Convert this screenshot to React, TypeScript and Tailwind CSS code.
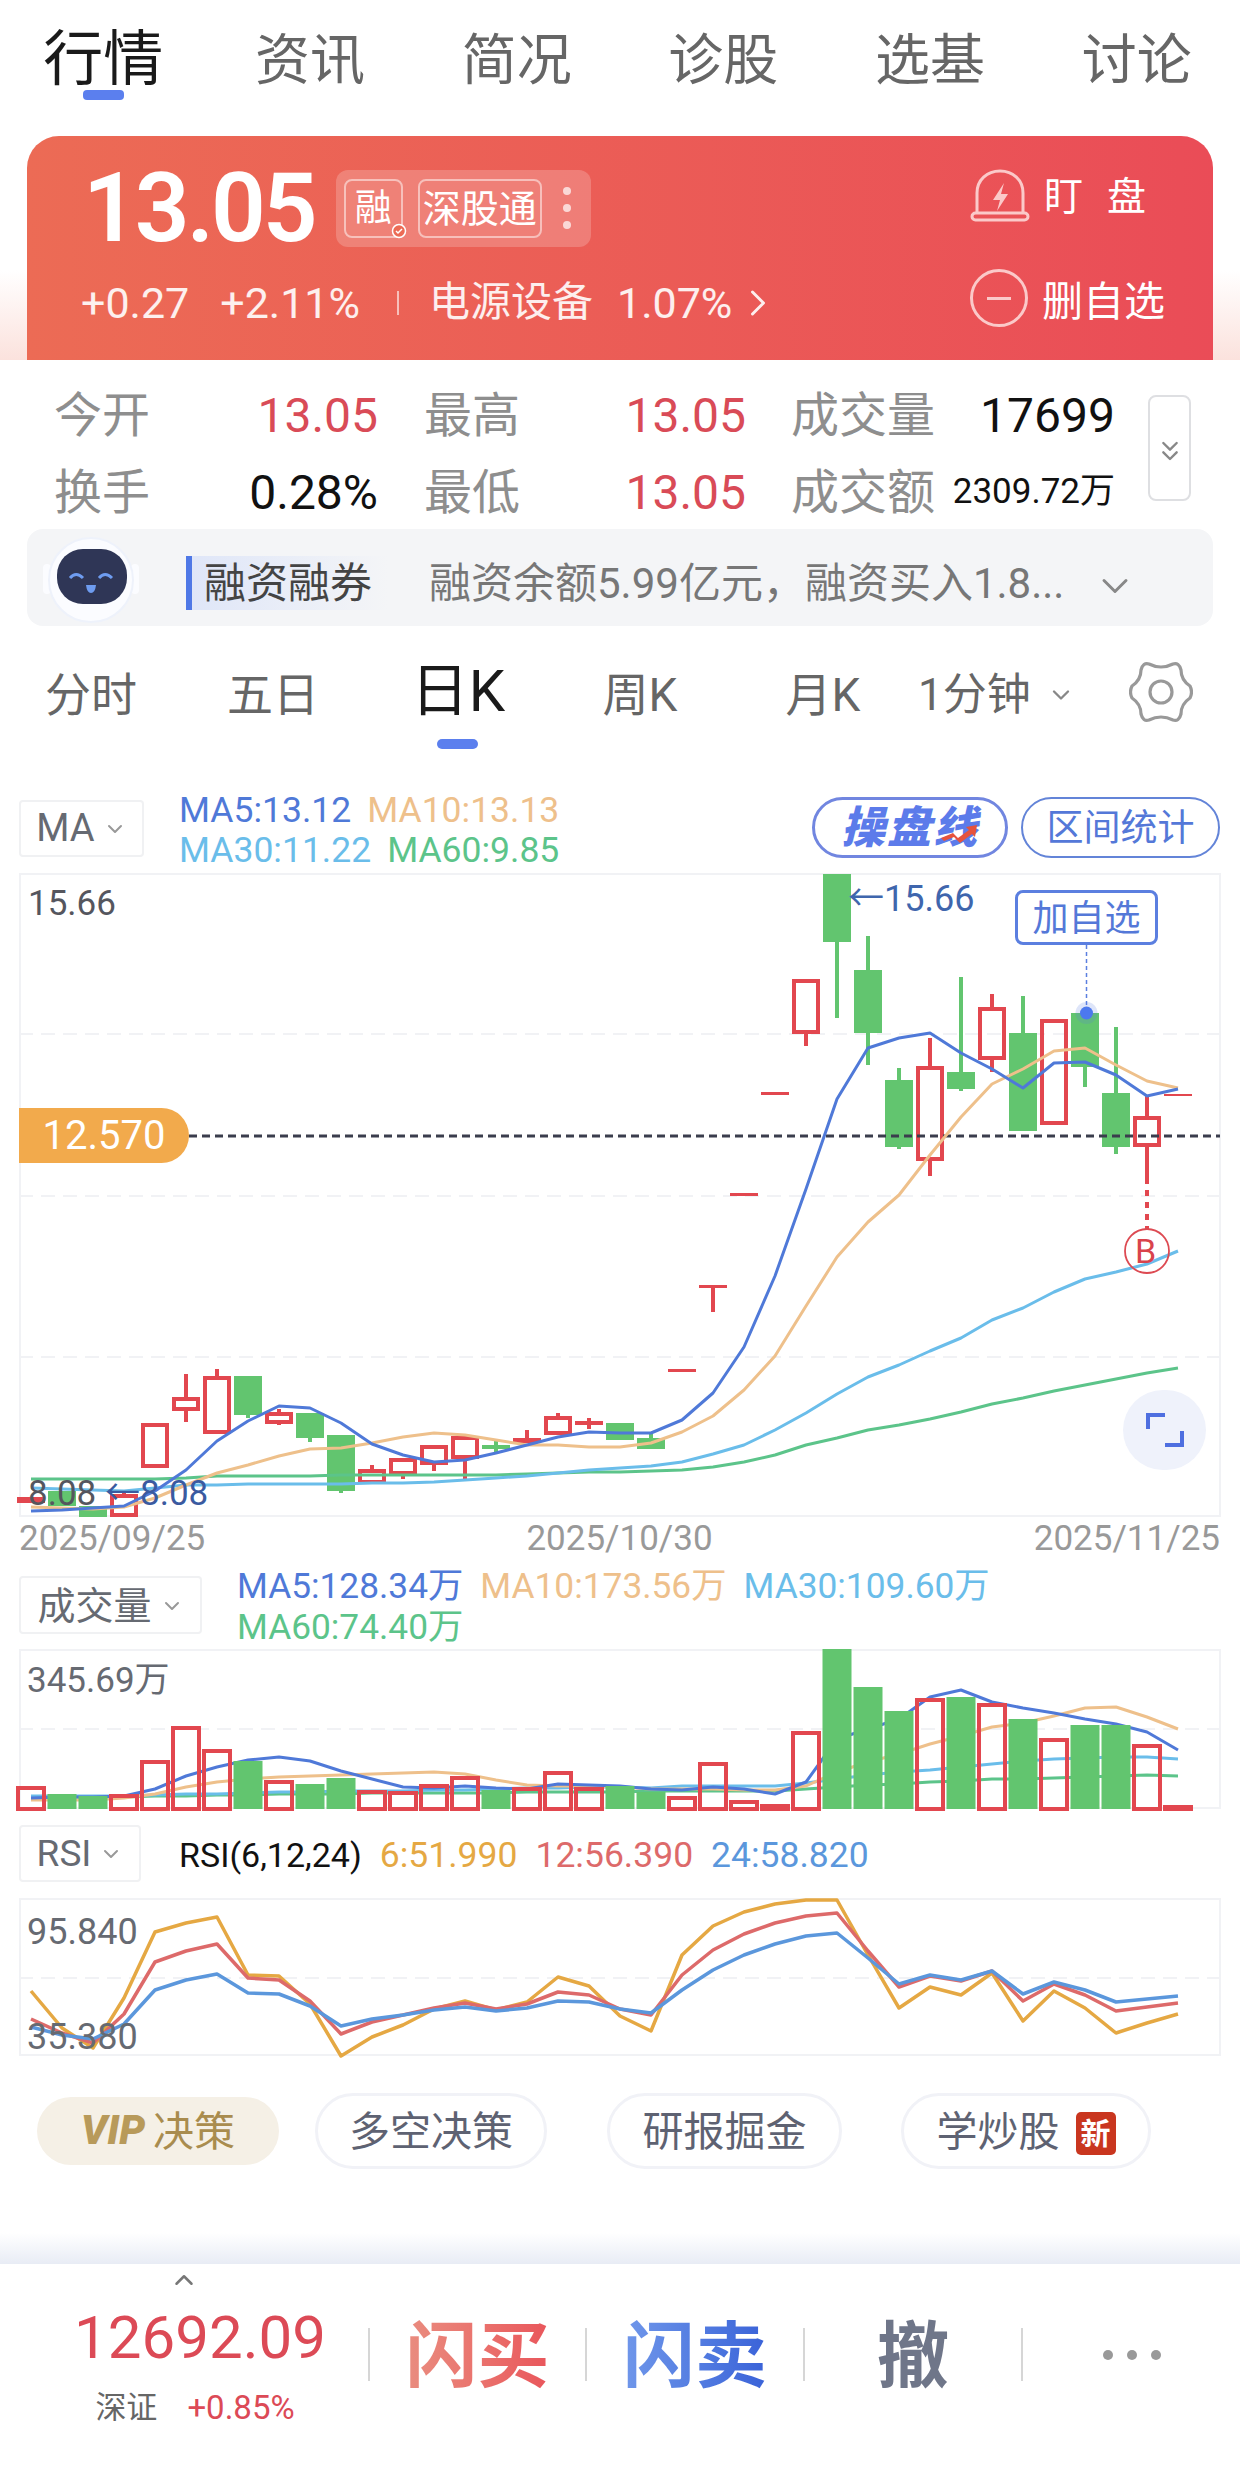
import { ChevronDown, ChevronRight, ChevronUp, ChevronsDown } from "lucide-react";

const tabs = ["资讯", "简况", "诊股", "选基", "讨论"];

// [up, bodyTop, bodyBottom, wickTop, wickBottom]
const candles: [number, number, number, number, number][] = [
  [1, 1497, 1503, 1497, 1503],
  [0, 1491, 1506, 1491, 1506],
  [0, 1506, 1517, 1506, 1517],
  [1, 1496, 1515, 1490, 1515],
  [1, 1425, 1466, 1425, 1466],
  [1, 1399, 1409, 1374, 1422],
  [1, 1378, 1432, 1369, 1432],
  [0, 1376, 1415, 1376, 1418],
  [1, 1414, 1422, 1409, 1425],
  [0, 1413, 1438, 1413, 1442],
  [0, 1435, 1491, 1435, 1493],
  [1, 1471, 1482, 1465, 1482],
  [1, 1460, 1473, 1460, 1479],
  [1, 1447, 1463, 1447, 1471],
  [1, 1438, 1457, 1438, 1479],
  [0, 1445, 1449, 1441, 1453],
  [1, 1438, 1443, 1430, 1443],
  [1, 1418, 1433, 1413, 1433],
  [1, 1421, 1425, 1418, 1429],
  [0, 1423, 1440, 1423, 1440],
  [0, 1438, 1449, 1433, 1449],
  [1, 1369, 1372, 1369, 1372],
  [1, 1285, 1288, 1285, 1312],
  [1, 1193, 1196, 1193, 1196],
  [1, 1092, 1095, 1092, 1095],
  [1, 981, 1032, 981, 1046],
  [0, 874, 942, 874, 1018],
  [0, 970, 1033, 936, 1065],
  [0, 1080, 1147, 1068, 1149],
  [1, 1068, 1159, 1038, 1176],
  [0, 1072, 1089, 977, 1091],
  [1, 1009, 1058, 994, 1072],
  [0, 1033, 1131, 996, 1131],
  [1, 1021, 1123, 1021, 1123],
  [0, 1013, 1067, 1013, 1087],
  [0, 1093, 1147, 1027, 1154],
  [1, 1118, 1145, 1096, 1178],
  [1, 1094, 1096, 1094, 1096],
];

const ma5 = [1511, 1510, 1508, 1506, 1491, 1470, 1441, 1421, 1406, 1408, 1423, 1444, 1455, 1462, 1460, 1453, 1445, 1437, 1432, 1433, 1433, 1420, 1393, 1347, 1276, 1189, 1099, 1048, 1038, 1033, 1053, 1069, 1088, 1063, 1062, 1075, 1096, 1089];
const ma10 = [1507, 1508, 1509, 1507, 1498, 1485, 1473, 1465, 1456, 1449, 1448, 1443, 1437, 1433, 1435, 1440, 1445, 1445, 1447, 1447, 1443, 1432, 1416, 1390, 1356, 1306, 1257, 1222, 1195, 1155, 1117, 1084, 1069, 1051, 1048, 1065, 1081, 1088];
const ma30 = [1488, 1489, 1490, 1491, 1488, 1485, 1485, 1484, 1484, 1484, 1484, 1483, 1483, 1482, 1480, 1478, 1476, 1473, 1470, 1468, 1466, 1462, 1454, 1445, 1430, 1413, 1394, 1377, 1365, 1351, 1338, 1320, 1308, 1292, 1279, 1272, 1264, 1251];
const ma60 = [1479, 1479, 1479, 1479, 1479, 1478, 1476, 1476, 1476, 1476, 1475, 1475, 1475, 1475, 1475, 1475, 1474, 1473, 1472, 1472, 1471, 1470, 1467, 1462, 1455, 1445, 1438, 1430, 1425, 1419, 1412, 1404, 1398, 1391, 1385, 1379, 1373, 1368];

const volumes: [number, number][] = [
  [1, 1788], [0, 1794], [0, 1796], [1, 1796], [1, 1762], [1, 1728], [1, 1751], [0, 1761], [1, 1782], [0, 1784],
  [0, 1778], [1, 1792], [1, 1793], [1, 1786], [1, 1778], [0, 1790], [1, 1789], [1, 1773], [1, 1789], [0, 1786],
  [0, 1792], [1, 1798], [1, 1764], [1, 1802], [1, 1806], [1, 1733], [0, 1649], [0, 1687], [0, 1711], [1, 1700],
  [0, 1697], [1, 1705], [0, 1719], [1, 1740], [0, 1725], [0, 1725], [1, 1746], [1, 1807],
];

const volMa5 = [1798, 1797, 1797, 1796, 1789, 1776, 1767, 1760, 1757, 1761, 1771, 1779, 1787, 1788, 1786, 1788, 1789, 1784, 1785, 1786, 1789, 1790, 1787, 1789, 1794, 1782, 1739, 1729, 1719, 1697, 1690, 1702, 1708, 1713, 1719, 1724, 1732, 1750];
const volMa10 = [1800, 1800, 1800, 1798, 1794, 1787, 1782, 1779, 1777, 1776, 1775, 1774, 1773, 1772, 1774, 1780, 1785, 1786, 1786, 1787, 1789, 1789, 1789, 1790, 1790, 1786, 1772, 1762, 1754, 1744, 1736, 1727, 1723, 1716, 1708, 1707, 1717, 1729];
const volMa30 = [1796, 1796, 1796, 1796, 1795, 1794, 1794, 1793, 1792, 1792, 1791, 1791, 1791, 1790, 1790, 1789, 1788, 1788, 1787, 1787, 1788, 1786, 1786, 1786, 1786, 1783, 1779, 1775, 1772, 1770, 1767, 1764, 1761, 1759, 1758, 1757, 1757, 1759];
const volMa60 = [1797, 1797, 1797, 1797, 1796, 1796, 1795, 1795, 1794, 1794, 1794, 1793, 1793, 1793, 1793, 1793, 1792, 1792, 1792, 1792, 1791, 1791, 1791, 1791, 1791, 1789, 1787, 1785, 1784, 1782, 1781, 1779, 1779, 1778, 1777, 1776, 1775, 1776];

const rsi6 = [1991, 2028, 2048, 1998, 1932, 1923, 1917, 1975, 1976, 2004, 2056, 2037, 2025, 2009, 2001, 2010, 2002, 1977, 1986, 2016, 2031, 1955, 1926, 1912, 1904, 1900, 1900, 1955, 2008, 1987, 1995, 1973, 2021, 1991, 2008, 2033, 2023, 2014];
const rsi12 = [2019, 2033, 2043, 2014, 1962, 1951, 1944, 1978, 1980, 2001, 2034, 2022, 2015, 2008, 2003, 2009, 2004, 1992, 1995, 2009, 2015, 1975, 1950, 1934, 1923, 1916, 1913, 1951, 1987, 1976, 1981, 1971, 2001, 1984, 1995, 2011, 2007, 2003];
const rsi24 = [2027, 2035, 2039, 2024, 1990, 1980, 1974, 1993, 1994, 2006, 2026, 2019, 2015, 2010, 2007, 2011, 2008, 2001, 2002, 2009, 2013, 1990, 1970, 1955, 1944, 1936, 1933, 1958, 1984, 1975, 1980, 1971, 1994, 1982, 1990, 2002, 1999, 1996];

const cx = (i: number) => 31 + 31 * i;
const toPoints = (ys: number[]) => ys.map((y, i) => `${cx(i)},${y}`).join(" ");

function Line({ ys, color, width = 3 }: { ys: number[]; color: string; width?: number }) {
  return <polyline points={toPoints(ys)} fill="none" stroke={color} strokeWidth={width} strokeLinejoin="round" />;
}

function GridLine({ y }: { y: number }) {
  return <line x1="19" x2="1220" y1={y} y2={y} stroke="#f1f2f5" strokeWidth="2" strokeDasharray="14 8" />;
}

function Dropdown({ label, className }: { label: string; className: string }) {
  return (
    <div className={`flex items-center justify-center gap-2 rounded border-2 border-[#f0f1f3] text-[#666a72] ${className}`}>
      <span>{label}</span>
      <ChevronDown className="h-6 w-6 text-[#999]" strokeWidth={2} />
    </div>
  );
}

function Stat({ label, value, tone, small }: { label: string; value: string; tone: string; small?: boolean }) {
  return (
    <div className="flex h-[77px] items-center justify-between">
      <span className="text-[48px] text-[#8e8e8e]">{label}</span>
      <span className={`${small ? "text-[35px]" : "text-[48px]"} ${tone}`}>{value}</span>
    </div>
  );
}

function Pill({ children, className }: { children: React.ReactNode; className: string }) {
  return (
    <div className={`flex h-[76px] items-center justify-center rounded-[38px] border-[3px] border-[#f1f2f7] pt-[4px] text-[41px] text-[#5e6272] ${className}`}>
      {children}
    </div>
  );
}

export default function App() {
  return (
    <div className="h-[2475px] w-[1240px] overflow-hidden bg-white font-['Roboto','Noto_Sans_CJK_SC',sans-serif]">
      {/* top tabs */}
      <nav className="grid h-[136px] grid-cols-6 pt-[25px]">
        <div className="relative flex h-[70px] justify-center text-[60px] leading-[70px] text-[#1a1a1a]">
          行情
          <span className="absolute left-[83px] top-[65px] h-[10px] w-[41px] rounded-[4px] bg-[#5b7fee]" />
        </div>
        {tabs.map((t) => (
          <div key={t} className="flex h-[70px] justify-center text-[55px] leading-[70px] text-[#666]">
            {t}
          </div>
        ))}
      </nav>

      {/* quote card */}
      <div className="h-[224px] bg-gradient-to-b from-white via-white via-60% to-[#fbe2dd] px-[27px]">
        <div className="flex h-full justify-between rounded-t-[32px] bg-gradient-to-r from-[#ec6b55] to-[#ea4c57] pl-[56px] pr-[47px] text-white">
          <div>
            <div className="mt-[33px] flex h-[78px] items-center">
              <span className="text-[96px] font-semibold tracking-[-3px] leading-none">13.05</span>
              <div className="ml-[21px] flex h-[77px] w-[255px] items-center gap-[15px] rounded-[12px] bg-white/20 pl-[8px]">
                <div className="relative flex h-[59px] w-[59px] items-center justify-center rounded-[8px] border-2 border-white/50 pt-[2px] text-[37px]">
                  融
                  <svg viewBox="0 0 16 16" className="absolute -bottom-[3px] -right-[6px] h-4 w-4">
                    <circle cx="8" cy="8" r="6.5" fill="#ec6b55" stroke="white" strokeWidth="1.5" />
                    <path d="M5 8l2 2 4-4" fill="none" stroke="white" strokeWidth="1.5" />
                  </svg>
                </div>
                <div className="flex h-[59px] w-[124px] items-center justify-center rounded-[8px] border-2 border-white/50 pt-[2px] text-[38px]">深股通</div>
                <div className="ml-[6px] flex flex-col gap-[9px]">
                  <span className="h-2 w-2 rounded-full bg-white/70" />
                  <span className="h-2 w-2 rounded-full bg-white/70" />
                  <span className="h-2 w-2 rounded-full bg-white/70" />
                </div>
              </div>
            </div>
            <div className="-ml-[2px] mt-[31px] flex h-[50px] items-center text-[43px] text-white/90">
              <span>+0.27</span>
              <span className="ml-[31px]">+2.11%</span>
              <span className="ml-[37px] h-6 w-[2px] bg-white/60" />
              <span className="ml-[30px] text-[41px]">电源设备</span>
              <span className="ml-[24px]">1.07%</span>
              <ChevronRight className="ml-[4px] h-[44px] w-[44px]" strokeWidth={1.6} />
            </div>
          </div>
          <div className="w-[196px] pt-[33px]">
            <div className="flex h-[54px] items-center">
              <svg viewBox="0 0 60 54" className="h-[54px] w-[60px] shrink-0" fill="none" stroke="#fbc9c9" strokeWidth="3">
                <path d="M7 44V24C7 11 17 2 30 2s23 9 23 22v20" />
                <rect x="2" y="44" width="56" height="7" rx="3.5" />
                <path d="M34 14L23 31h7l-3 11 11-17h-7z" fill="#fbc9c9" stroke="none" />
              </svg>
              <span className="ml-[14px] flex gap-[24px] whitespace-nowrap pt-[3px] text-[39px] text-white">
                <span>盯</span>
                <span>盘</span>
              </span>
            </div>
            <div className="mt-[46px] flex h-[58px] items-center">
              <div className="flex h-[58px] w-[58px] shrink-0 items-center justify-center rounded-full border-[3px] border-[#fbc9c9]">
                <span className="h-[3px] w-[24px] bg-[#fbc9c9]" />
              </div>
              <span className="ml-[14px] whitespace-nowrap pt-[9px] text-[41px] text-white">删自选</span>
            </div>
          </div>
        </div>
      </div>

      {/* stats */}
      <div className="flex h-[169px] pl-[54px] pt-[17px]">
        <div className="w-[324px]">
          <Stat label="今开" value="13.05" tone="text-[#d94b57]" />
          <Stat label="换手" value="0.28%" tone="text-[#111]" />
        </div>
        <div className="ml-[46px] w-[322px]">
          <Stat label="最高" value="13.05" tone="text-[#d94b57]" />
          <Stat label="最低" value="13.05" tone="text-[#d94b57]" />
        </div>
        <div className="ml-[45px] w-[324px]">
          <Stat label="成交量" value="17699" tone="text-[#111]" />
          <Stat label="成交额" value="2309.72万" tone="text-[#111]" small />
        </div>
        <div className="ml-[33px] mt-[18px] flex h-[106px] w-[43px] items-end justify-center rounded-[8px] border-2 border-[#dedfe2] pb-[32px]">
          <ChevronsDown className="h-8 w-8 text-[#888]" strokeWidth={1.8} />
        </div>
      </div>

      {/* margin info */}
      <div className="mx-[27px] flex h-[97px] items-center rounded-[16px] bg-[#f4f5f7]">
        <svg viewBox="0 0 96 88" className="ml-[16px] mt-[5px] h-[88px] w-[96px]">
          <rect x="0" y="28" width="8" height="30" rx="4" fill="#fbfcff" />
          <rect x="88" y="28" width="8" height="30" rx="4" fill="#fbfcff" />
          <ellipse cx="48" cy="44" rx="42" ry="42" fill="#fbfcff" stroke="#eef2fb" strokeWidth="2" />
          <rect x="14" y="13" width="70" height="55" rx="26" fill="#2f3656" />
          <path d="M27 42q6-7 13 0M56 42q6-7 13 0" fill="none" stroke="#6e9cf0" strokeWidth="3" />
          <path d="M43 49h10q-1 8-5 8t-5-8z" fill="#6e9cf0" />
        </svg>
        <div className="ml-[47px] mt-[11px] flex h-[54px] w-[201px] items-center border-l-[6px] border-[#4f78e6] bg-gradient-to-r from-[#dfe6f8] to-[#f4f5f7] pl-[12px] text-[42px] text-[#444]">
          融资融券
        </div>
        <span className="ml-[42px] mt-[11px] w-[640px] whitespace-nowrap text-[42px] text-[#777]">融资余额5.99亿元，融资买入1.8...</span>
        <ChevronDown className="ml-[24px] mt-[16px] h-[44px] w-[44px] text-[#888]" strokeWidth={1.6} />
      </div>

      {/* period tabs */}
      <div className="flex h-[162px] items-start pt-[43px] text-[46px] leading-[52px] text-[#666]">
        <span className="w-[182px] text-center">分时</span>
        <span className="w-[182px] text-center">五日</span>
        <span className="relative -ml-[4px] -mt-[4px] mr-[4px] w-[196px] text-center text-[58px] text-[#1a1a1a]">
          日K
          <span className="absolute left-[77px] top-[74px] h-[10px] w-[41px] rounded-[5px] bg-[#5b7fee]" />
        </span>
        <span className="w-[160px] text-center">周K</span>
        <span className="w-[206px] text-center">月K</span>
        <span className="-ml-[8px] flex w-[159px] items-center gap-[16px] text-[44px]">
          1分钟
          <ChevronDown className="h-7 w-7 text-[#888]" strokeWidth={2} />
        </span>
        <svg viewBox="0 0 64 64" className="ml-[52px] -mt-[9px] h-[64px] w-[64px]" fill="none" stroke="#999" strokeWidth="3.2" strokeLinejoin="round">
          <path d="M20 4Q32 10 44 4Q50 2 52 10Q52 20 61 26Q64 32 61 38Q52 44 52 54Q50 62 44 60Q32 54 20 60Q14 62 12 54Q12 44 3 38Q0 32 3 26Q12 20 12 10Q14 2 20 4Z" />
          <circle cx="32" cy="32" r="11" />
        </svg>
      </div>

      {/* chart header */}
      <div className="flex h-[85px] pl-[19px] pr-[20px]">
        <Dropdown label="MA" className="mt-[12px] h-[57px] w-[125px] text-[38px]" />
        <div className="ml-[35px] mt-[2px] text-[35.5px] leading-[40px]">
          <div className="flex gap-[16px]">
            <span className="text-[#4f79d8]">MA5:13.12</span>
            <span className="text-[#eec08b]">MA10:13.13</span>
          </div>
          <div className="flex gap-[16px]">
            <span className="text-[#6abdea]">MA30:11.22</span>
            <span className="text-[#5cc48a]">MA60:9.85</span>
          </div>
        </div>
        <div className="ml-auto mt-[9px] flex h-[61px] gap-[13px]">
          <div className="relative flex w-[196px] items-center justify-center rounded-full border-[3px] border-[#7186e0] text-[44px] font-black italic tracking-[2px] text-[#5c7bea]">
            操盘线
            <svg viewBox="0 0 40 20" className="absolute right-[26px] top-[24px] h-[20px] w-[40px]">
              <path d="M2 14L14 9l5 5 11-8-3-3 11-2-2 12-3-3-12 9-6-6-10 4z" fill="#e5533d" />
            </svg>
          </div>
          <div className="flex w-[199px] items-center justify-center rounded-full border-2 border-[#6384d8] pt-[3px] text-[37px] text-[#5478d8]">区间统计</div>
        </div>
      </div>

      {/* candle chart */}
      <div className="relative mx-[19px] h-[644px] border-x-2 border-y-2 border-[#f1f2f5]">
        <svg viewBox="19 873 1201 644" className="absolute -left-[2px] -top-[2px] h-[644px] w-[1201px] overflow-visible">
          <GridLine y={1034} />
          <GridLine y={1196} />
          <GridLine y={1357} />
          {candles.map(([up, top, bottom, wickTop, wickBottom], i) => {
            const color = up ? "#e2474f" : "#62c56f";
            const flat = bottom - top < 8;
            return (
              <g key={i}>
                {wickTop < top && <line x1={cx(i)} x2={cx(i)} y1={wickTop} y2={top} stroke={color} strokeWidth="4" />}
                {wickBottom > bottom && <line x1={cx(i)} x2={cx(i)} y1={bottom} y2={wickBottom} stroke={color} strokeWidth="4" />}
                {up && !flat ? (
                  <rect x={cx(i) - 12} y={top} width="24" height={bottom - top} fill="none" stroke={color} strokeWidth="4" />
                ) : (
                  <rect x={cx(i) - 14} y={top} width="28" height={bottom - top} fill={color} />
                )}
              </g>
            );
          })}
          <line x1="189" x2="1220" y1="1136" y2="1136" stroke="#3a3d4d" strokeWidth="3" strokeDasharray="8 5" />
          <Line ys={ma60} color="#5cc48a" />
          <Line ys={ma30} color="#6abdea" />
          <Line ys={ma10} color="#eec08b" />
          <Line ys={ma5} color="#4f79d8" />
          <line x1="1147" x2="1147" y1="1178" y2="1229" stroke="#e2474f" strokeWidth="4" strokeDasharray="6 6" />
          <ellipse cx="1147" cy="1251" rx="22" ry="22" fill="none" stroke="#dd4a52" strokeWidth="1.8" />
          <line x1="1086.5" x2="1086.5" y1="945" y2="1008" stroke="#5b7fe0" strokeWidth="1.5" strokeDasharray="4 3" />
          <circle cx="1086.5" cy="1013" r="11" fill="#5b7fe0" fillOpacity="0.2" />
          <circle cx="1086.5" cy="1013" r="6.5" fill="#4c78ee" />
        </svg>
        <span className="absolute left-[7px] top-[10px] text-[35px] leading-[38px] text-[#55565e]">15.66</span>
        <span className="absolute left-[827px] top-[5px] text-[36px] leading-[38px] text-[#3f66ad]">←15.66</span>
        <div className="absolute left-[994px] top-[15px] flex h-[55px] w-[143px] items-center justify-center rounded-[8px] border-[3px] border-[#5b7fe0] pt-[3px] text-[36px] text-[#5478d8]">
          加自选
        </div>
        <div className="absolute -left-[2px] top-[233px] flex h-[55px] w-[170px] items-center justify-center rounded-r-[28px] bg-[#f2aa4c] text-[40px] text-white">12.570</div>
        <span className="absolute left-[7px] top-[600px] text-[35px] leading-[38px] text-[#55565e]">8.08</span>
        <span className="absolute left-[84px] top-[600px] text-[35px] leading-[38px] text-[#3a5aa0]">←8.08</span>
        <span className="absolute left-[1114px] top-[356px] text-[34px] leading-[40px] text-[#d9434c]">B</span>
        <div className="absolute left-[1102px] top-[515px] flex h-[80px] w-[83px] items-center justify-center rounded-full bg-[#eff2fb]">
          <svg viewBox="0 0 38 36" className="h-[36px] w-[38px]" fill="none" stroke="#4e6fe0" strokeWidth="4">
            <path d="M2 17V3h17M36 19v14H19" />
          </svg>
        </div>
      </div>

      {/* dates */}
      <div className="flex h-[42px] items-center justify-between pl-[19px] pr-[20px] pt-[2px] text-[35px] text-[#999]">
        <span>2025/09/25</span>
        <span>2025/10/30</span>
        <span>2025/11/25</span>
      </div>

      {/* volume */}
      <div className="flex h-[90px] pl-[19px]">
        <Dropdown label="成交量" className="mt-[17px] h-[58px] w-[183px] pt-[2px] text-[38px]" />
        <div className="ml-[35px] mt-[7px] text-[35.3px] leading-[41px]">
          <div className="flex gap-[17px]">
            <span className="text-[#4f79d8]">MA5:128.34万</span>
            <span className="text-[#eec08b]">MA10:173.56万</span>
            <span className="text-[#6abdea]">MA30:109.60万</span>
          </div>
          <div className="text-[#5cc48a]">MA60:74.40万</div>
        </div>
      </div>
      <div className="relative mx-[19px] h-[160px] border-2 border-[#f1f2f5]">
        <svg viewBox="19 1649 1201 160" className="absolute -left-[2px] -top-[2px] h-[160px] w-[1201px] overflow-visible">
          <GridLine y={1729} />
          <Line ys={volMa60} color="#5cc48a" />
          <Line ys={volMa30} color="#6abdea" />
          <Line ys={volMa10} color="#eec08b" />
          <Line ys={volMa5} color="#4f79d8" />
          {volumes.map(([up, top], i) =>
            up ? (
              <rect key={i} x={cx(i) - 13} y={top} width="26" height={1809 - top} fill="none" stroke="#e2474f" strokeWidth="4" />
            ) : (
              <rect key={i} x={cx(i) - 14.5} y={top} width="29" height={1809 - top} fill="#62c56f" />
            ),
          )}
        </svg>
        <span className="absolute left-[6px] top-[10px] text-[35px] leading-[40px] text-[#666a72]">345.69万</span>
      </div>

      {/* rsi */}
      <div className="flex h-[89px] pl-[19px]">
        <Dropdown label="RSI" className="mt-[16px] h-[57px] w-[122px] text-[37px]" />
        <div className="ml-[38px] mt-[18px] flex h-[57px] items-center gap-[18px] text-[35.5px]">
          <span className="text-[34px] text-[#111]">RSI(6,12,24)</span>
          <span className="text-[#e5a843]">6:51.990</span>
          <span className="text-[#dd6a6a]">12:56.390</span>
          <span className="text-[#5b97dc]">24:58.820</span>
        </div>
      </div>
      <div className="relative mx-[19px] h-[158px] border-2 border-[#f1f2f5]">
        <svg viewBox="19 1898 1201 158" className="absolute -left-[2px] -top-[2px] h-[158px] w-[1201px] overflow-visible">
          <GridLine y={1978} />
          <Line ys={rsi6} color="#e5a843" width={3.5} />
          <Line ys={rsi12} color="#dd6a6a" width={3.5} />
          <Line ys={rsi24} color="#5b97dc" width={3.5} />
        </svg>
        <span className="absolute left-[6px] top-[11px] text-[36px] leading-[42px] text-[#666a72]">95.840</span>
        <span className="absolute left-[6px] top-[116px] text-[36px] leading-[42px] text-[#666a72]">35.380</span>
      </div>

      {/* feature pills */}
      <div className="ml-[37px] mt-[37px] flex h-[76px] items-center">
        <div className="flex h-[68px] w-[242px] items-center justify-center gap-[8px] rounded-[34px] bg-[#f5f0e6] text-[41px] text-[#a98c4e]">
          <span className="font-black italic text-[#b89a5a]">VIP</span>
          <span className="pt-[4px]">决策</span>
        </div>
        <Pill className="ml-[36px] w-[232px]">多空决策</Pill>
        <Pill className="ml-[60px] w-[235px]">研报掘金</Pill>
        <Pill className="ml-[59px] w-[250px] gap-[16px]">
          <span>学炒股</span>
          <span className="flex h-[43px] w-[40px] items-center justify-center rounded-[5px] bg-[#c9361f] text-[30px] font-bold text-white">新</span>
        </Pill>
      </div>

      {/* bottom bar */}
      <div className="mt-[64px] h-[31px] bg-gradient-to-b from-white to-[#e8ecf5]" />
      <div className="grid h-[211px] grid-cols-[368px_217px_218px_218px_219px] bg-white">
        <div className="flex flex-col items-center">
          <ChevronUp className="mt-[1px] h-[30px] w-[36px] text-[#777]" strokeWidth={2} />
          <span className="ml-[32px] mt-[9px] text-[60px] leading-[68px] text-[#dc4a56]">12692.09</span>
          <div className="ml-[22px] mt-[16px] flex items-center gap-[30px] leading-[40px]">
            <span className="text-[31px] text-[#666]">深证</span>
            <span className="text-[33px] text-[#dc4a56]">+0.85%</span>
          </div>
        </div>
        <div className="mt-[64px] flex h-[53px] items-center justify-center border-l-2 border-[#d6d6d6]">
          <span className="mt-[4px] bg-gradient-to-r from-[#e98d80] to-[#e9555b] bg-clip-text text-[72px] font-bold text-transparent">闪买</span>
        </div>
        <div className="mt-[64px] flex h-[53px] items-center justify-center border-l-2 border-[#d6d6d6]">
          <span className="mt-[4px] bg-gradient-to-r from-[#7097ea] to-[#3a62d8] bg-clip-text text-[72px] font-bold text-transparent">闪卖</span>
        </div>
        <div className="mt-[64px] flex h-[53px] items-center justify-center border-l-2 border-[#d6d6d6] text-[72px] font-bold text-[#6f7689]">
          <span className="mt-[4px]">撤</span>
        </div>
        <div className="mt-[64px] flex h-[53px] items-center justify-center gap-[14px] border-l-2 border-[#d6d6d6]">
          <span className="h-[10px] w-[10px] rounded-full bg-[#999]" />
          <span className="h-[10px] w-[10px] rounded-full bg-[#999]" />
          <span className="h-[10px] w-[10px] rounded-full bg-[#999]" />
        </div>
      </div>
    </div>
  );
}
